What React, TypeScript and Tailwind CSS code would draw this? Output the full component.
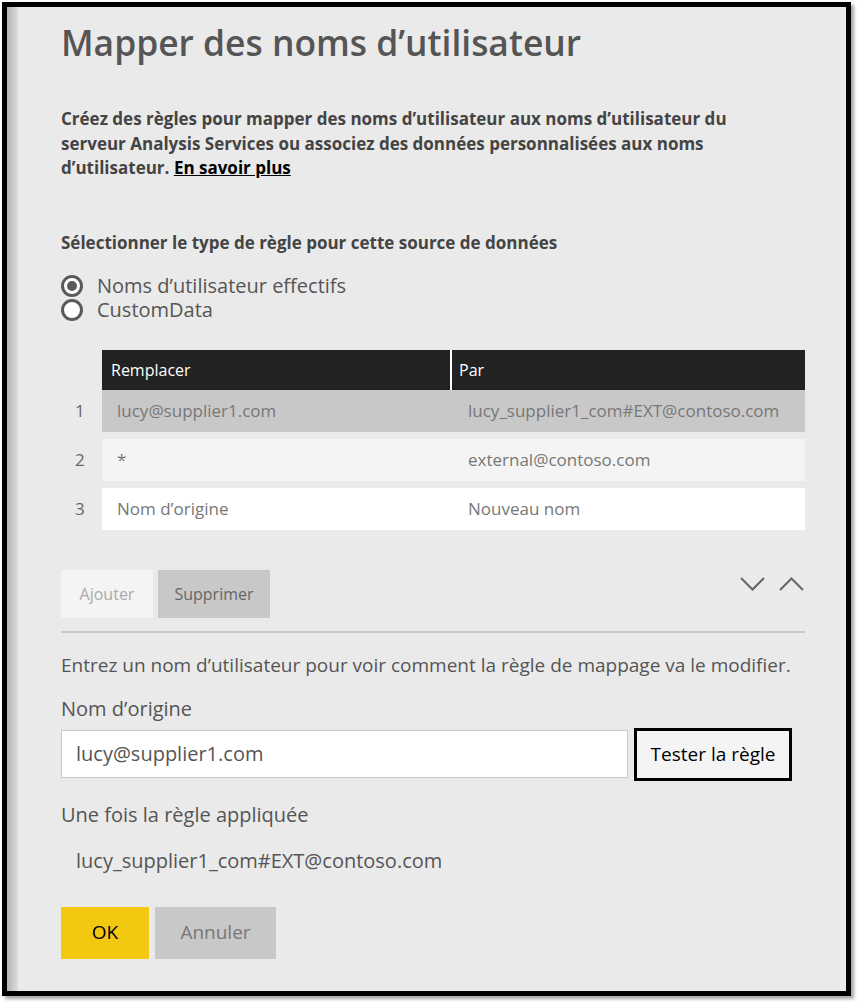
const rows = [
  { n: 1, from: "lucy@supplier1.com", to: "lucy_supplier1_com#EXT@contoso.com", bg: "bg-[#c8c8c8]" },
  { n: 2, from: "*", to: "external@contoso.com", bg: "bg-[#f4f4f4]" },
  { n: 3, from: "Nom d’origine", to: "Nouveau nom", bg: "bg-white" },
];

function Radio({ checked, label }: { checked: boolean; label: string }) {
  return (
    <label className="flex h-6 items-center gap-[14px]">
      <span className="flex size-[22px] items-center justify-center rounded-full border-[3px] border-[#5a5a5a] bg-white">
        {checked ? <span className="size-[10px] rounded-full bg-[#5a5a5a]" /> : null}
      </span>
      <span className="text-[20px] leading-[24px] text-[#555]">{label}</span>
    </label>
  );
}

function Chevron({ up }: { up?: boolean }) {
  return (
    <svg aria-hidden width="25" height="14" viewBox="0 0 25 14" className="text-[#666]">
      <polyline
        points={up ? "1,13 12.5,1.5 24,13" : "1,1 12.5,12.5 24,1"}
        fill="none"
        stroke="currentColor"
        strokeWidth="2"
      />
    </svg>
  );
}

export default function App() {
  return (
    <div className="h-[1002px] w-[860px] bg-white pt-[2px] pl-[2px] font-['Open_Sans',sans-serif]">
      <div className="flex h-[994px] w-[849px] border-[5px] border-black bg-[#eaeaea] shadow-[3px_3px_3px_rgba(0,0,0,0.35)]">
        <div className="w-[11px] shrink-0 bg-gradient-to-r from-[#b4b4b4] to-[#dedede]" />
        <div className="flex flex-1 flex-col pl-[43px] pr-[41px]">
          <h1 className="mt-[11px] text-[35.4px] leading-[48px] font-semibold text-[#555]">
            Mapper des noms d’utilisateur
          </h1>

          <p className="mt-[41px] text-[17px] leading-[24.5px] font-bold text-[#444]">
            Créez des règles pour mapper des noms d’utilisateur aux noms d’utilisateur du
            <br />
            serveur Analysis Services ou associez des données personnalisées aux noms
            <br />
            d’utilisateur.{" "}
            <a href="#" className="text-black underline">
              En savoir plus
            </a>
          </p>

          <p className="mt-[50px] text-[17px] leading-[24px] font-bold text-[#444]">
            Sélectionner le type de règle pour cette source de données
          </p>

          <div className="mt-[19px] flex flex-col">
            <Radio checked label="Noms d’utilisateur effectifs" />
            <Radio checked={false} label="CustomData" />
          </div>

          <div className="mt-[28px] flex flex-col text-[17px]">
            <div className="flex">
              <div className="w-[41px]" />
              <div className="flex h-[40px] flex-1 bg-[#222] text-[16px] text-white">
                <div className="flex w-[350px] items-center border-r-2 border-white pl-[9px]">Remplacer</div>
                <div className="flex flex-1 items-center pl-[7px]">Par</div>
              </div>
            </div>
            <div className="flex flex-col gap-[7px]">
              {rows.map((r) => (
                <div key={r.n} className="flex items-center">
                  <div className="w-[41px] pl-[14px] text-[#666]">{r.n}</div>
                  <div className={`flex h-[42px] flex-1 items-center text-[#777] ${r.bg}`}>
                    <div className="w-[350px] pl-[15px]">{r.from}</div>
                    <div className="flex-1 pl-[16px]">{r.to}</div>
                  </div>
                </div>
              ))}
            </div>
          </div>

          <div className="mt-[40px] flex items-start justify-between">
            <div className="flex gap-[5px] text-[16px]">
              <button className="h-[48px] w-[92px] bg-[#f4f4f4] text-[#aaa]">Ajouter</button>
              <button className="h-[48px] w-[112px] bg-[#c8c8c8] text-[#666]">Supprimer</button>
            </div>
            <div className="mt-[7px] mr-[1px] flex gap-[14px]">
              <Chevron />
              <Chevron up />
            </div>
          </div>

          <div className="mt-[13px] h-[2px] bg-[#c8c8c8]" />

          <p className="mt-[19px] text-[19px] leading-[26px] text-[#555]">
            Entrez un nom d’utilisateur pour voir comment la règle de mappage va le modifier.
          </p>

          <p className="mt-[18px] text-[20px] leading-[26px] text-[#555]">Nom d’origine</p>

          <div className="mt-[6px] flex items-center gap-[6px]">
            <div className="flex h-[48px] w-[567px] items-center border border-[#c8c8c8] bg-white pl-[14px] text-[20px] text-[#555]">
              lucy@supplier1.com
            </div>
            <button className="h-[53px] w-[158px] border-[3px] border-black bg-[#f4f4f4] text-[19px] text-black">
              Tester la règle
            </button>
          </div>

          <p className="mt-[21px] text-[20px] leading-[26px] text-[#555]">Une fois la règle appliquée</p>

          <p className="mt-[20px] pl-[15px] text-[20px] leading-[26px] text-[#555]">
            lucy_supplier1_com#EXT@contoso.com
          </p>

          <div className="mt-[33px] flex gap-[6px] text-[19px]">
            <button className="h-[52px] w-[88px] bg-[#f2c811] text-black">OK</button>
            <button className="h-[52px] w-[121px] bg-[#c8c8c8] text-[#777]">Annuler</button>
          </div>
        </div>
      </div>
    </div>
  );
}
